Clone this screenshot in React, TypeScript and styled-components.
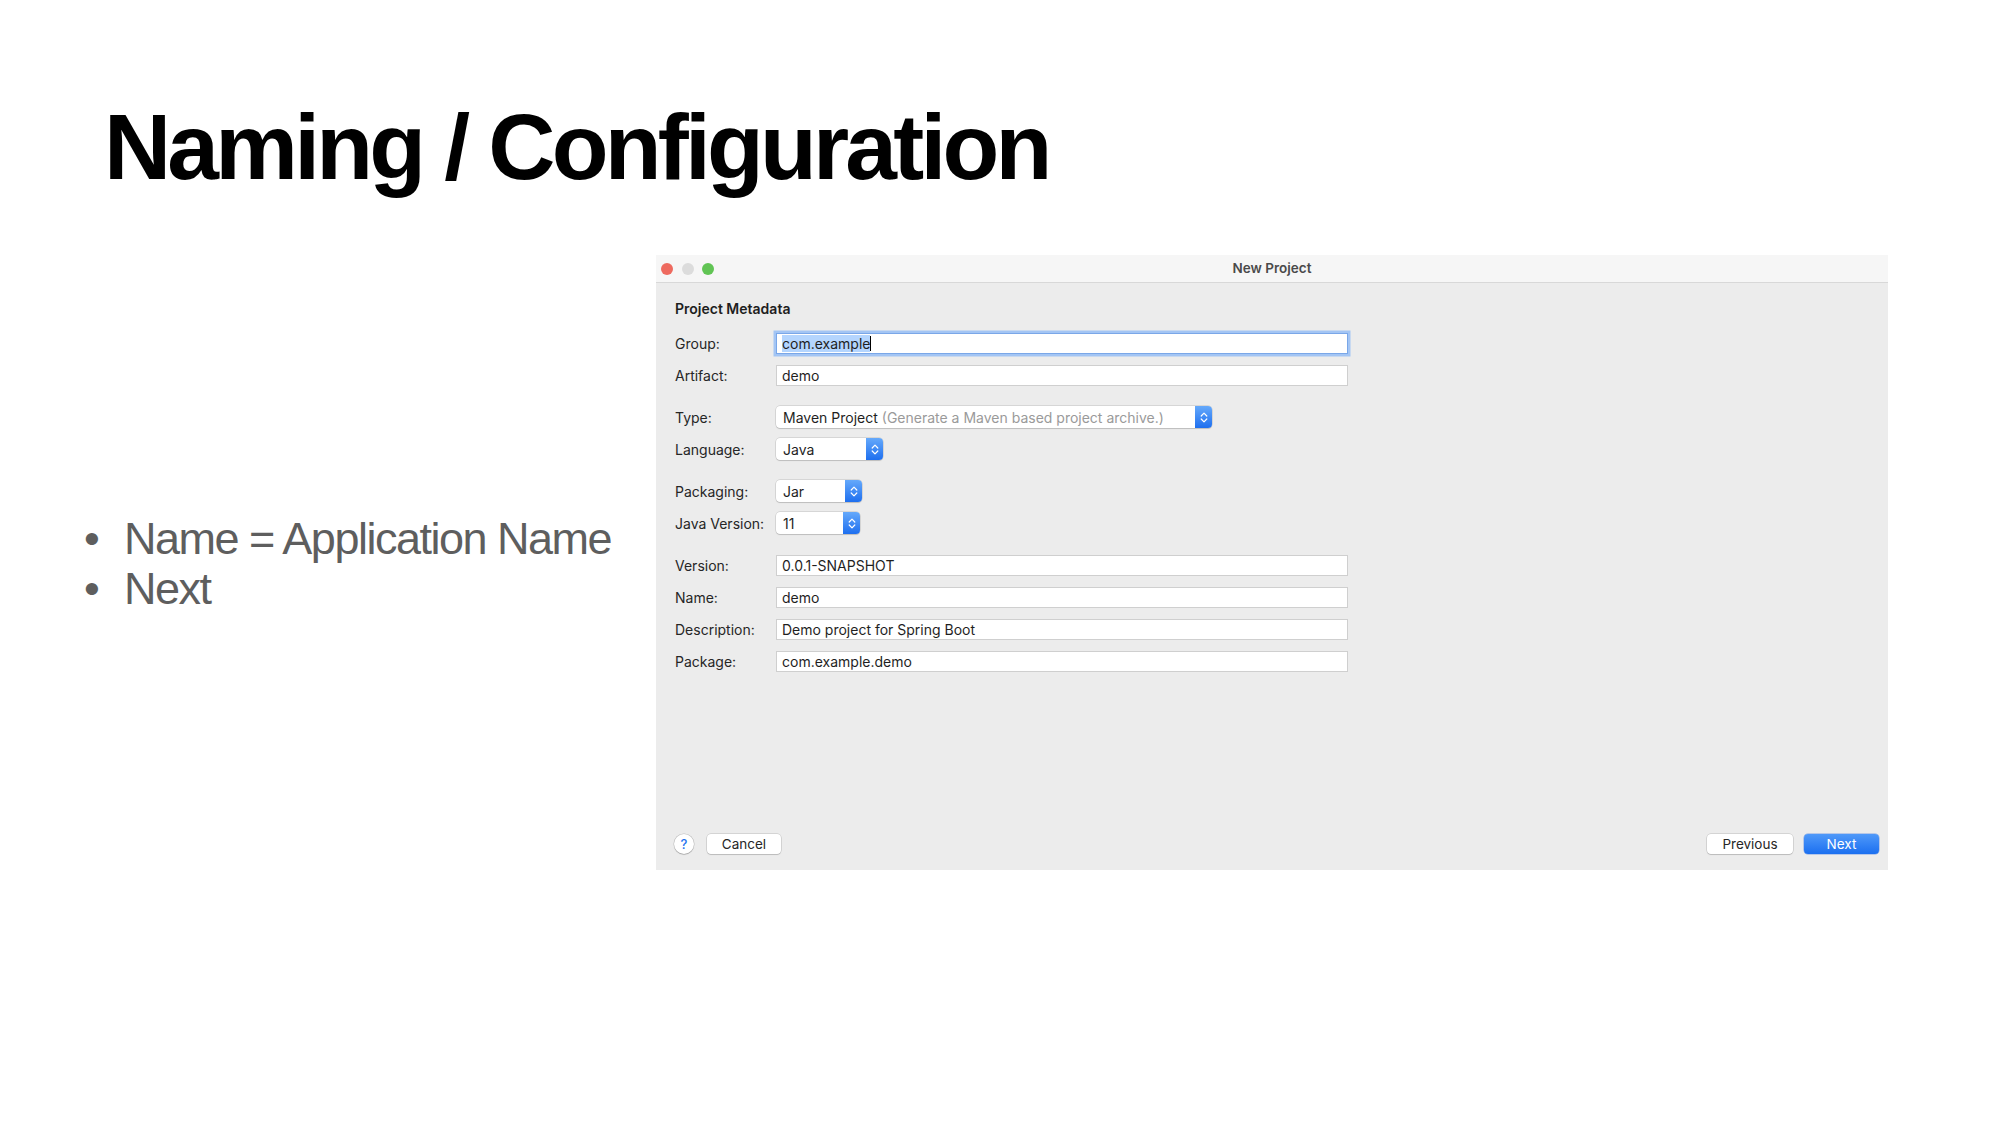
import React from "react";
import styled, { createGlobalStyle } from "styled-components";

const GlobalStyle = createGlobalStyle`
  html, body { margin: 0; padding: 0; background: #ffffff; }
  body { width: 2000px; height: 1125px; overflow: hidden; }
  * { box-sizing: border-box; }
`;

const Slide = styled.div`
  width: 2000px;
  height: 1125px;
  padding-top: 100px;
  display: flex;
  flex-direction: column;
  font-family: "Liberation Sans", Arial, sans-serif;
  background: #ffffff;
`;

const Title = styled.h1`
  margin: 0 0 0 104px;
  font-size: 93px;
  line-height: 94px;
  font-weight: 700;
  letter-spacing: -3.8px;
  color: #000000;
`;

const Content = styled.div`
  margin-top: 61px;
  padding-left: 84px;
  display: flex;
  align-items: center;
`;

const BulletList = styled.ul`
  list-style: none;
  margin: 3px 0 0 0;
  padding: 0;
  width: 572px;
  flex: none;
`;

const BulletItem = styled.li`
  display: flex;
  align-items: baseline;
  height: 50px;
  line-height: 50px;
  font-size: 45px;
  letter-spacing: -1.5px;
  color: #5e5e5e;
  white-space: nowrap;
`;

const Dot = styled.span`
  width: 40px;
  flex: none;
  letter-spacing: 0;
`;

const Dialog = styled.div`
  width: 1232px;
  height: 615px;
  flex: none;
  background: #ececec;
  display: flex;
  flex-direction: column;
  font-family: Inter, "Liberation Sans", Arial, sans-serif;
  font-size: 14px;
  color: #222222;
`;

const TitleBar = styled.div`
  height: 28px;
  background: #f6f6f6;
  border-bottom: 1px solid #d8d8d8;
  display: grid;
  grid-template-columns: 1fr auto 1fr;
  align-items: center;
`;

const Lights = styled.div`
  display: flex;
  gap: 8.5px;
  padding-left: 5px;
`;

const Light = styled.span<{ $color: string }>`
  width: 12px;
  height: 12px;
  border-radius: 50%;
  background: ${(p) => p.$color};
`;

const WindowTitle = styled.div`
  font-size: 13.5px;
  font-weight: 600;
  color: #4a4a4a;
  margin-top: -1px;
`;

const Body = styled.div`
  flex: 1;
  display: flex;
  flex-direction: column;
  padding: 17px 9px 16px 19px;
`;

const SectionTitle = styled.div`
  font-weight: 600;
  font-size: 14px;
  line-height: 18px;
  color: #1e1e1e;
  margin-bottom: 9px;
`;

const Row = styled.div<{ $spaced?: boolean }>`
  display: grid;
  grid-template-columns: 101px auto;
  align-items: center;
  justify-content: start;
  height: 32px;
  margin-top: ${(p) => (p.$spaced ? "10px" : "0")};
`;

const Label = styled.div`
  color: #262626;
`;

const TextField = styled.div<{ $focused?: boolean }>`
  width: 572px;
  height: 21px;
  background: #ffffff;
  border: 1px solid ${(p) => (p.$focused ? "#7aa7e8" : "#cfcfcf")};
  box-shadow: ${(p) => (p.$focused ? "0 0 0 2.5px #a3c5f4" : "none")};
  padding-left: 5px;
  display: flex;
  align-items: center;
  color: #1f1f1f;
  white-space: nowrap;
`;

const Selection = styled.span`
  background: #b4d5fe;
`;

const Caret = styled.span`
  display: inline-block;
  width: 1px;
  height: 15px;
  background: #000000;
`;

const Select = styled.div<{ $width: number }>`
  width: ${(p) => p.$width}px;
  height: 22px;
  display: flex;
  background: #ffffff;
  border-radius: 4px;
  box-shadow: 0 0 0 0.5px rgba(0, 0, 0, 0.18), 0 1px 1px rgba(0, 0, 0, 0.12);
  overflow: hidden;
`;

const SelectValue = styled.div`
  flex: 1;
  display: flex;
  align-items: center;
  padding-left: 7px;
  color: #1f1f1f;
  white-space: nowrap;
`;

const Hint = styled.span`
  color: #9a9a9a;
  margin-left: 4px;
`;

const Stepper = styled.div`
  width: 17px;
  flex: none;
  background: linear-gradient(#65a9fb, #1e6fef);
  display: flex;
  align-items: center;
  justify-content: center;
`;

const Spacer = styled.div`
  flex: 1;
`;

const Footer = styled.div`
  display: flex;
  align-items: center;
`;

const FooterGroup = styled.div<{ $gap: number }>`
  display: flex;
  align-items: center;
  gap: ${(p) => p.$gap}px;
`;

const HelpButton = styled.div`
  width: 20px;
  height: 20px;
  border-radius: 50%;
  background: #ffffff;
  box-shadow: 0 0 0 0.5px rgba(0, 0, 0, 0.2), 0 1px 1px rgba(0, 0, 0, 0.15);
  color: #1f74ef;
  font-size: 13px;
  font-weight: 500;
  display: flex;
  align-items: center;
  justify-content: center;
  margin-left: -1px;
`;

const Button = styled.div<{ $width: number; $primary?: boolean }>`
  width: ${(p) => p.$width}px;
  height: 20px;
  border-radius: 4px;
  display: flex;
  align-items: center;
  justify-content: center;
  font-size: 13.5px;
  background: ${(p) => (p.$primary ? "linear-gradient(#4f99f9, #1b6ff0)" : "#ffffff")};
  color: ${(p) => (p.$primary ? "#ffffff" : "#262626")};
  box-shadow: ${(p) =>
    p.$primary
      ? "0 0 0 0.5px rgba(20,90,220,0.5)"
      : "0 0 0 0.5px rgba(0,0,0,0.2), 0 1px 1px rgba(0,0,0,0.12)"};
`;

const Chevrons = () => (
  <svg width="8" height="13" viewBox="0 0 8 13" fill="none">
    <path d="M1.2 5 L4 2.2 L6.8 5" stroke="#ffffff" strokeWidth="1.2" strokeLinecap="round" strokeLinejoin="round" />
    <path d="M1.2 8 L4 10.8 L6.8 8" stroke="#ffffff" strokeWidth="1.2" strokeLinecap="round" strokeLinejoin="round" />
  </svg>
);

type FieldRow = { label: string; value: string; spaced?: boolean };

const lowerFields: FieldRow[] = [
  { label: "Version:", value: "0.0.1-SNAPSHOT", spaced: true },
  { label: "Name:", value: "demo" },
  { label: "Description:", value: "Demo project for Spring Boot" },
  { label: "Package:", value: "com.example.demo" },
];

export default function App() {
  return (
    <>
      <GlobalStyle />
      <Slide>
        <Title>Naming / Configuration</Title>
        <Content>
          <BulletList>
            <BulletItem>
              <Dot>•</Dot>Name = Application Name
            </BulletItem>
            <BulletItem>
              <Dot>•</Dot>Next
            </BulletItem>
          </BulletList>
          <Dialog>
            <TitleBar>
              <Lights>
                <Light $color="#ee6a5f" />
                <Light $color="#dcdcdc" />
                <Light $color="#61c454" />
              </Lights>
              <WindowTitle>New Project</WindowTitle>
              <div />
            </TitleBar>
            <Body>
              <SectionTitle>Project Metadata</SectionTitle>
              <Row>
                <Label>Group:</Label>
                <TextField $focused>
                  <Selection>com.example</Selection>
                  <Caret />
                </TextField>
              </Row>
              <Row>
                <Label>Artifact:</Label>
                <TextField>demo</TextField>
              </Row>
              <Row $spaced>
                <Label>Type:</Label>
                <Select $width={436}>
                  <SelectValue>
                    Maven Project<Hint>(Generate a Maven based project archive.)</Hint>
                  </SelectValue>
                  <Stepper>
                    <Chevrons />
                  </Stepper>
                </Select>
              </Row>
              <Row>
                <Label>Language:</Label>
                <Select $width={107}>
                  <SelectValue>Java</SelectValue>
                  <Stepper>
                    <Chevrons />
                  </Stepper>
                </Select>
              </Row>
              <Row $spaced>
                <Label>Packaging:</Label>
                <Select $width={86}>
                  <SelectValue>Jar</SelectValue>
                  <Stepper>
                    <Chevrons />
                  </Stepper>
                </Select>
              </Row>
              <Row>
                <Label>Java Version:</Label>
                <Select $width={84}>
                  <SelectValue>11</SelectValue>
                  <Stepper>
                    <Chevrons />
                  </Stepper>
                </Select>
              </Row>
              {lowerFields.map((f) => (
                <Row key={f.label} $spaced={f.spaced}>
                  <Label>{f.label}</Label>
                  <TextField>{f.value}</TextField>
                </Row>
              ))}
              <Spacer />
              <Footer>
                <FooterGroup $gap={13}>
                  <HelpButton>?</HelpButton>
                  <Button $width={74}>Cancel</Button>
                </FooterGroup>
                <Spacer />
                <FooterGroup $gap={11}>
                  <Button $width={86}>Previous</Button>
                  <Button $width={75} $primary>
                    Next
                  </Button>
                </FooterGroup>
              </Footer>
            </Body>
          </Dialog>
        </Content>
      </Slide>
    </>
  );
}
